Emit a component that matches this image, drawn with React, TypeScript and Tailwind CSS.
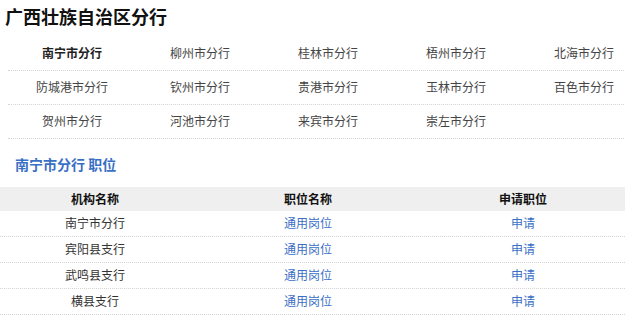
import React from "react";

const cities = [
  "南宁市分行", "柳州市分行", "桂林市分行", "梧州市分行", "北海市分行",
  "防城港市分行", "钦州市分行", "贵港市分行", "玉林市分行", "百色市分行",
  "贺州市分行", "河池市分行", "来宾市分行", "崇左市分行",
];

const rows = ["南宁市分行", "宾阳县支行", "武鸣县支行", "横县支行"];

export default function App() {
  const gridRows = [cities.slice(0, 5), cities.slice(5, 10), cities.slice(10, 14)];
  return (
    <div
      className="w-[625px] h-[327px] overflow-hidden bg-white text-[#333]"
      style={{ fontFamily: '"Noto Sans CJK SC", "Noto Sans", sans-serif' }}
    >
      <h1 className="pl-[5px] pt-[4px] h-[37px] text-[18px] leading-[24px] font-bold text-[#111]">
        广西壮族自治区分行
      </h1>
      <div className="ml-[8px] w-[640px]">
        {gridRows.map((r, i) => (
          <div key={i} className="grid grid-cols-5 h-[34px] pb-[1px] border-b border-dotted border-[#d4d4d4]">
            {r.map((c, j) => (
              <div
                key={c}
                className={`flex items-center justify-center text-[12px] ${
                  i === 0 && j === 0 ? "font-bold text-[#222]" : "text-[#444]"
                }`}
              >
                {c}
              </div>
            ))}
          </div>
        ))}
      </div>
      <h2 className="mt-[15px] pl-[15px] h-[20px] text-[14px] leading-[20px] font-bold text-[#3a6fc6]">
        南宁市分行 职位
      </h2>
      <div className="mt-[13px]">
        <div className="grid grid-cols-[190px_236px_194px] h-[24px] bg-[#efefef] text-[12px] font-bold text-[#111]">
          <div className="flex items-center justify-center">机构名称</div>
          <div className="flex items-center justify-center">职位名称</div>
          <div className="flex items-center justify-center">申请职位</div>
        </div>
        {rows.map((r) => (
          <div
            key={r}
            className="grid grid-cols-[190px_236px_194px] h-[26px] pb-[2px] border-b border-dotted border-[#d4d4d4] text-[12px]"
          >
            <div className="flex items-center justify-center text-[#333]">{r}</div>
            <div className="flex items-center justify-center text-[#3a6fc6]">通用岗位</div>
            <div className="flex items-center justify-center text-[#3a6fc6]">申请</div>
          </div>
        ))}
      </div>
    </div>
  );
}
